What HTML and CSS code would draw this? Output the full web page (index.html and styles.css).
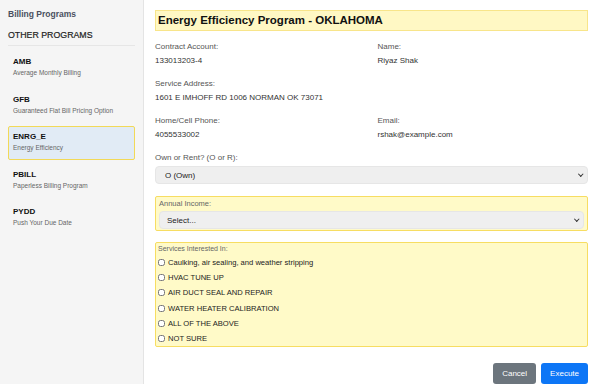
FILE: index.html
```html
<!DOCTYPE html>
<html lang="en">
<head>
  <meta charset="UTF-8">
  <title>Billing Programs</title>
  <link rel="stylesheet" href="styles.css">
</head>
<body>
  <div class="layout">
    <aside class="sidebar">
      <h2>Billing Programs</h2>
      <h3>OTHER PROGRAMS</h3>
      <ul class="programs">
        <li>
          <strong>AMB</strong>
          <span>Average Monthly Billing</span>
        </li>
        <li>
          <strong>GFB</strong>
          <span>Guaranteed Flat Bill Pricing Option</span>
        </li>
        <li class="active">
          <strong>ENRG_E</strong>
          <span>Energy Efficiency</span>
        </li>
        <li>
          <strong>PBILL</strong>
          <span>Paperless Billing Program</span>
        </li>
        <li>
          <strong>PYDD</strong>
          <span>Push Your Due Date</span>
        </li>
      </ul>
    </aside>

    <main class="main">
      <h1>Energy Efficiency Program - OKLAHOMA</h1>

      <div class="info">
        <div class="field">
          <label>Contract Account:</label>
          <div class="value">133013203-4</div>
        </div>
        <div class="field">
          <label>Name:</label>
          <div class="value">Riyaz Shak</div>
        </div>
        <div class="field wide">
          <label>Service Address:</label>
          <div class="value">1601 E IMHOFF RD 1006 NORMAN OK 73071</div>
        </div>
        <div class="field">
          <label>Home/Cell Phone:</label>
          <div class="value">4055533002</div>
        </div>
        <div class="field">
          <label>Email:</label>
          <div class="value">rshak@example.com</div>
        </div>
      </div>

      <div class="field">
        <label for="own">Own or Rent? (O or R):</label>
        <div class="select">
          <select id="own">
            <option>O (Own)</option>
            <option>R (Rent)</option>
          </select>
        </div>
      </div>

      <div class="box income">
        <label for="income">Annual Income:</label>
        <div class="select">
          <select id="income">
            <option>Select...</option>
          </select>
        </div>
      </div>

      <div class="box services">
        <label>Services Interested In:</label>
        <div class="check"><input type="checkbox"> Caulking, air sealing, and weather stripping</div>
        <div class="check"><input type="checkbox"> HVAC TUNE UP</div>
        <div class="check"><input type="checkbox"> AIR DUCT SEAL AND REPAIR</div>
        <div class="check"><input type="checkbox"> WATER HEATER CALIBRATION</div>
        <div class="check"><input type="checkbox"> ALL OF THE ABOVE</div>
        <div class="check"><input type="checkbox"> NOT SURE</div>
      </div>

      <div class="actions">
        <button class="cancel">Cancel</button>
        <button class="execute">Execute</button>
      </div>
    </main>
  </div>
</body>
</html>
```

FILE: styles.css
```css
body {
  margin: 0;
  font-family: "Liberation Sans", Arial, sans-serif;
  color: #333;
  background: #fff;
}
.layout {
  display: flex;
  height: 384px;
  overflow: hidden;
}
.sidebar {
  width: 127px;
  flex-shrink: 0;
  padding: 8px;
  background: #f5f5f5;
  border-right: 1px solid #e4e4e4;
}
.sidebar h2 {
  margin: 0;
  font-size: 8.5px;
  line-height: 12px;
  color: #4a5060;
}
.sidebar h3 {
  margin: 8px 0 0;
  padding-bottom: 3px;
  font-size: 8.8px;
  line-height: 14px;
  font-weight: normal;
  color: #1e1e1e;
  -webkit-text-stroke: 0.2px #1e1e1e;
  border-bottom: 1px solid #e6e6e6;
}
.programs {
  list-style: none;
  margin: 5px 0 0;
  padding: 0;
}
.programs li {
  height: 34px;
  box-sizing: border-box;
  padding: 4px 4px 6px;
  margin-bottom: 3.5px;
  border: 1px solid transparent;
  border-radius: 2px;
}
.programs li.active {
  background: #e1ebf5;
  border-color: #f2d957;
}
.programs strong {
  display: block;
  font-size: 8px;
  line-height: 12px;
  color: #111;
}
.programs span {
  display: block;
  font-size: 6.5px;
  line-height: 10px;
  color: #666;
}
.main {
  flex: 1;
  padding: 10px 12px 0 11px;
}
h1 {
  margin: 0;
  height: 21px;
  box-sizing: border-box;
  padding: 0 2px;
  font-size: 11.5px;
  line-height: 19px;
  color: #111;
  background: #fff8c4;
  border: 1px solid #f8e58a;
}
.info {
  display: grid;
  grid-template-columns: 1fr 1fr;
  column-gap: 12px;
  row-gap: 9px;
  margin-top: 9px;
}
.info .wide {
  grid-column: span 2;
}
.field label {
  display: block;
  font-size: 8px;
  line-height: 14px;
  color: #555;
}
.value {
  font-size: 8px;
  line-height: 14px;
  color: #333;
}
.main > .field {
  margin-top: 9px;
}
.select {
  position: relative;
  margin-top: 1px;
}
.select::after {
  content: "";
  position: absolute;
  right: 6px;
  top: 6px;
  width: 2.5px;
  height: 2.5px;
  border-right: 1.2px solid #333;
  border-bottom: 1.2px solid #333;
  transform: rotate(45deg);
  pointer-events: none;
}
select {
  display: block;
  width: 100%;
  height: 18px;
  padding: 0 0 0 9px;
  font-family: inherit;
  font-size: 8px;
  color: #222;
  background: #efefef;
  border: 1px solid #e6e6e6;
  border-radius: 4px;
  -webkit-appearance: none;
  appearance: none;
}
.income select {
  padding-left: 7px;
}
.box {
  border: 1px solid #f7dd62;
  background: #fffac8;
  border-radius: 2px;
  padding: 1px 3px 1px;
}
.box label {
  display: block;
  font-size: 7px;
  line-height: 12px;
  color: #666;
}
.income {
  margin-top: 12px;
}
.income label {
  font-size: 7.5px;
}
.services {
  margin-top: 11px;
  padding: 0 2px 0;
}
.check {
  display: flex;
  align-items: center;
  height: 15.2px;
  font-size: 7.6px;
  color: #222;
}
.check input {
  width: 7px;
  height: 7px;
  margin: 0 3px 0 0;
}
.actions {
  display: flex;
  justify-content: flex-end;
  gap: 5px;
  margin-top: 16px;
}
button {
  height: 21px;
  padding: 0 9px;
  font-family: inherit;
  font-size: 8px;
  color: #fff;
  border: none;
  border-radius: 3px;
  cursor: pointer;
}
.cancel {
  background: #6c757d;
}
.execute {
  background: #0d76f6;
}
```
